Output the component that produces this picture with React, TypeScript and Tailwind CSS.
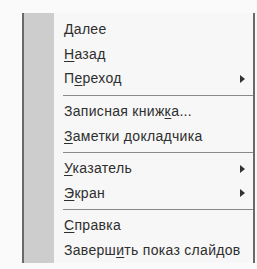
const items: ({ label: string; u: number; sub?: boolean } | "sep")[] = [
  { label: "Далее", u: 0 },
  { label: "Назад", u: 0 },
  { label: "Переход", u: 1, sub: true },
  "sep",
  { label: "Записная книжка...", u: 13 },
  { label: "Заметки докладчика", u: 0 },
  "sep",
  { label: "Указатель", u: 0, sub: true },
  { label: "Экран", u: 0, sub: true },
  "sep",
  { label: "Справка", u: 0 },
  { label: "Завершить показ слайдов", u: 6 },
];

const Label = ({ label, u }: { label: string; u: number }) => (
  <span>
    {label.slice(0, u)}
    <span className="underline underline-offset-2">{label[u]}</span>
    {label.slice(u + 1)}
  </span>
);

export default function App() {
  return (
    <div className="w-[257px] h-[269px] bg-[#fafafa] overflow-hidden pt-[13px] pl-[22px]">
      <div
        className="w-[233px] h-[250px] flex border-l-2 border-r-2 border-[#6a6a6a] bg-[#f7f7f7] text-[#2e2e2e] text-[14px]"
        style={{ fontFamily: '"Liberation Sans", Arial, sans-serif' }}
      >
        <div className="w-[30px] shrink-0 bg-[#cdcdcd]" />
        <div className="flex-1 flex flex-col pt-1">
          {items.map((it, i) =>
            it === "sep" ? (
              <div key={i} className="h-2 flex items-center pl-[9px]">
                <div className="h-px w-full bg-[#8a8a8a]" />
              </div>
            ) : (
              <div key={i} className="h-[25px] flex items-center pl-[10px] pr-[8px]">
                <div className="flex-1 whitespace-nowrap tracking-[0.3px]">
                  <Label label={it.label} u={it.u} />
                </div>
                {it.sub && (
                  <div className="w-0 h-0 border-y-[4px] border-y-transparent border-l-[5px] border-l-[#333]" />
                )}
              </div>
            )
          )}
        </div>
      </div>
    </div>
  );
}
